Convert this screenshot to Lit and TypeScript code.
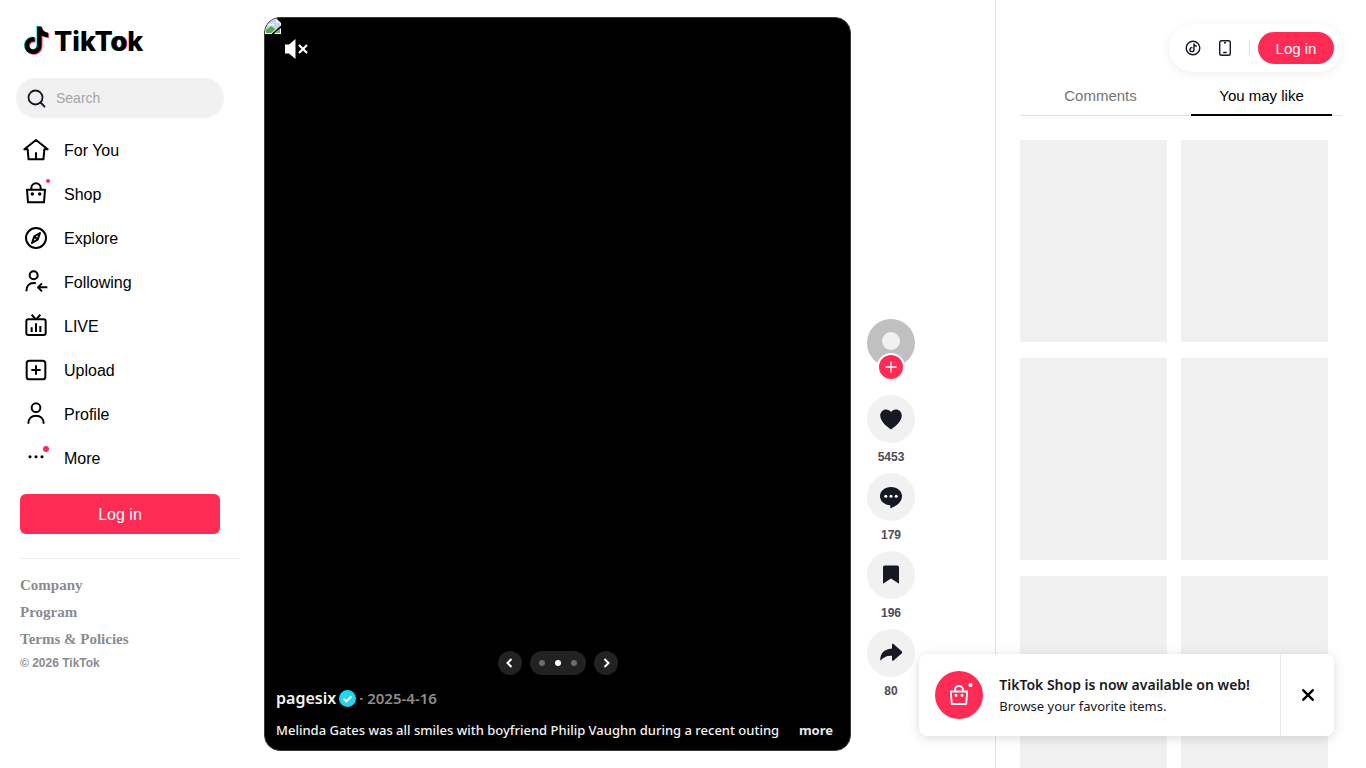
import { LitElement, html, css, svg } from "lit";
import { customElement, property } from "lit/decorators.js";

const glyphs: Record<string, unknown> = {
  home: svg`<path d="M6.500 23h5l1.300 15h22.400l1.300-15h5L24 9z" /><path d="M24 27.500V38" />`,
  shop: svg`<path d="M10.500 17.500h27L36 36.500H12zM17 17.500V15a7 7 0 0 1 14 0v2.500" /><circle class="solid" cx="18.500" cy="24" r="2.600" /><circle class="solid" cx="29.500" cy="24" r="2.600" />`,
  explore: svg`<circle cx="24" cy="24" r="15" /><path d="M30 16.500l-3.500 10-8.500 5 3.500-10z" /><path d="M21.500 21.500l5 5" />`,
  following: svg`<circle cx="20.500" cy="14" r="6" /><path d="M9.500 38c0-8 4.500-12.500 11-12.500 1.200 0 2.300.1 3.300.4M41 32H27.500M33 26l-6 6 6 6" />`,
  live: svg`<path d="M17.500 7l5.500 6.500M30.500 7 25 13.500" /><rect x="9.500" y="14" width="29" height="23.500" rx="3" /><path d="M24 20v13M17.500 26v7M30.500 24v9" />`,
  upload: svg`<rect x="10" y="10" width="28" height="28" rx="4" /><path d="M24 17v14M17 24h14" />`,
  profile: svg`<circle cx="24" cy="14.500" r="6.500" /><path d="M12.500 38.500c0-8 5-12 11.500-12s11.500 4 11.500 12" />`,
  more: svg`<circle class="solid" cx="15" cy="22" r="2.300" /><circle class="solid" cx="24" cy="22" r="2.300" /><circle class="solid" cx="33" cy="22" r="2.300" />`,
};

const note = "M17 .5h4.500c.4 3.600 2.800 5.800 6.500 6.200v4.500c-2.500 0-4.700-.8-6.500-2V19.500a8.500 8.500 0 1 1-7-8.400v4.600a4 4 0 1 0 2.500 3.800z";

@customElement("nav-item")
class NavItem extends LitElement {
  @property() icon = "home";
  @property() label = "";
  @property() dot = "";
  static styles = css`
    :host { display: block; }
    a { display: flex; align-items: center; gap: 12px; height: 44px; color: #000; text-decoration: none; font-size: 16px; }
    .label { padding-top: 2px; }
    .icon { position: relative; display: flex; }
    svg { width: 32px; height: 32px; fill: none; stroke: #000; stroke-width: 3; stroke-linejoin: round; }
    .solid { fill: #000; stroke: none; }
    .dot { position: absolute; border-radius: 50%; background: #fe2c55; }
    .small { width: 4px; height: 4px; top: 1px; right: 2px; }
    .large { width: 6px; height: 6px; top: 4px; right: 3px; }
  `;
  render() {
    return html`<a href="#"><span class="icon"><svg viewBox="0 0 48 48" aria-hidden="true">${glyphs[this.icon]}</svg>${this.dot ? html`<span class="dot ${this.dot}"></span>` : ""}</span><span class="label">${this.label}</span></a>`;
  }
}

@customElement("action-button")
class ActionButton extends LitElement {
  @property() name = "";
  @property() count = "";
  static styles = css`
    :host { display: flex; flex-direction: column; align-items: center; }
    button { display: grid; place-items: center; width: 48px; height: 48px; border: 0; border-radius: 50%; padding: 0; background: #f1f1f2; color: #161823; }
    svg { width: 24px; height: 24px; fill: currentColor; }
    .hole { fill: #fff; }
    strong { font-size: 12px; line-height: 18px; padding: 5px 0 7px; color: #4c4d56; }
  `;
  render() {
    const shapes: Record<string, unknown> = {
      Like: svg`<path d="M12 22.500C8 20 1.200 14.500 1.200 8.600 1.200 5 3.800 2.400 7 2.400c2 0 3.900 1 5 2.700 1.100-1.700 3-2.700 5-2.700 3.200 0 5.800 2.600 5.800 6.200C22.800 14.500 16 20 12 22.500z" />`,
      Comment: svg`<path d="M12 2C5.800 2 1 6 1 11.300c0 5 4.600 8.700 10.300 9v3c5.500-1.600 11.700-6 11.700-12C23 6 18.200 2 12 2z" /><circle class="hole" cx="6.800" cy="11.300" r="1.500" /><circle class="hole" cx="12" cy="11.300" r="1.500" /><circle class="hole" cx="17.200" cy="11.300" r="1.500" />`,
      Save: svg`<path d="M4 4.500C4 3.400 4.800 2.500 6 2.500h12c1.200 0 2 .9 2 2v16.300L12 15.500l-8 5.300z" />`,
      Share: svg`<path d="M13 3.600c0-.9.900-1.200 1.500-.7l8.200 7.400c.6.600.6 1.500 0 2.100l-8.200 7.200c-.6.500-1.500.2-1.500-.7v-4.200C7.500 14.400 4 16.500 1.200 19.800 1.200 13 4.500 8 13 7.500z" />`,
    };
    return html`<button aria-label=${this.name}><svg viewBox="0 0 24 24">${shapes[this.name]}</svg></button><strong>${this.count}</strong>`;
  }
}

@customElement("app-root")
class AppRoot extends LitElement {
  static styles = css`
    * { box-sizing: border-box; }
    :host { display: grid; grid-template-columns: 240px minmax(0, 1fr) 371px; height: 100vh; overflow: hidden; background: #fff; color: #000; font-family: "Liberation Sans", Arial, sans-serif; }
    button { font-family: inherit; border: 0; padding: 0; cursor: pointer; }
    a { text-decoration: none; color: inherit; }
    .red { background: #fe2c55; color: #fff; }

    .sidebar { padding: 24px 0 0 20px; }
    .logo { display: flex; align-items: center; gap: 2px; height: 36px; font: 800 27px/36px Inter, sans-serif; }
    .logo svg { width: 32px; height: 32px; }
    .tint { text-shadow: -1px 0 #25f4ee, 1px 0 #fe2c55; }
    .search { display: flex; align-items: center; gap: 8px; height: 40px; margin: 18px 16px 10px -4px; padding: 0 16px 0 8px; border-radius: 20px; background: #f1f1f2; }
    .search svg { flex: none; width: 24px; height: 24px; fill: none; stroke: #161823; stroke-width: 1.800; stroke-linecap: round; }
    .search input { min-width: 0; width: 100%; border: 0; padding: 0; outline: 0; background: none; font: 14px/20px "Liberation Sans", Arial, sans-serif; }
    .search input::placeholder { color: #a5a5a9; opacity: 1; }
    .login { display: block; width: calc(100% - 20px); height: 40px; margin: 14px 0 24px; padding-top: 2px; border-radius: 6px; font-size: 16px; }
    .footer { display: flex; flex-direction: column; padding-top: 13px; border-top: 1px solid #ececed; color: #8a8b91; font: bold 15px/27px "Liberation Serif", "Times New Roman", serif; }
    .copyright { font: bold 12px/20px "Liberation Sans", Arial, sans-serif; }

    .feed { display: flex; gap: 16px; padding: 17px 80px 17px 24px; }
    .player { position: relative; display: flex; flex-direction: column; justify-content: space-between; flex: 1; min-width: 0; overflow: hidden; border: 1px solid #3a3a3a; border-radius: 16px; padding: 19px 11px 7px; background: #000; color: #f3f3f3; font-family: "Noto Sans", sans-serif; }
    .broken { position: absolute; top: 0; left: 0; width: 16px; height: 16px; }
    .mute { display: flex; width: 40px; height: 24px; margin-left: 8px; background: none; }
    .mute svg { width: 24px; height: 24px; }
    .pager { display: flex; justify-content: center; gap: 8px; margin-bottom: 10px; }
    .arrow { display: grid; place-items: center; width: 24px; height: 24px; border-radius: 50%; background: #222; }
    .arrow svg { width: 12px; height: 12px; fill: none; stroke: #fff; stroke-width: 2; }
    .dots { display: flex; align-items: center; justify-content: center; gap: 10px; width: 56px; border-radius: 12px; background: #222; }
    .dots span { width: 6px; height: 6px; border-radius: 50%; background: #6d6d6d; }
    .dots .on { background: #fff; }
    .author { display: flex; align-items: center; gap: 3px; height: 26px; font-size: 16px; font-weight: 600; }
    .author svg { width: 17px; height: 17px; }
    .date { color: #8e8e8e; font-size: 15px; }
    .caption { display: flex; justify-content: space-between; gap: 8px; margin-top: 6px; padding-right: 6px; font-size: 13px; font-weight: 500; line-height: 26px; }
    .caption p { margin: 0; }
    .caption button { background: none; color: #e8e8e8; font-size: 13px; font-weight: 700; }

    .actions { display: flex; flex-direction: column; justify-content: flex-end; padding-bottom: 44px; }
    .avatar { position: relative; height: 76px; }
    .avatar svg { width: 48px; height: 48px; display: block; }
    .follow { position: absolute; top: 36px; left: 12px; display: grid; place-items: center; width: 24px; height: 24px; border-radius: 50%; box-shadow: 0 0 0 2px #fff; }
    .avatar .follow svg { width: 12px; height: 12px; stroke: #fff; stroke-width: 1.300; }

    .related { min-width: 0; overflow: hidden; padding: 76px 24px 0; border-left: 1px solid #e3e3e4; }
    .tabs { display: grid; grid-template-columns: 1fr 1fr; height: 40px; border-bottom: 1px solid #e3e3e4; }
    .tabs button { margin: 0 10px -1px; border-bottom: 2px solid transparent; background: none; color: #73747b; font-size: 15px; }
    .tabs .active { color: #000; border-color: #000; }
    .grid { display: grid; grid-template-columns: 1fr 1fr; gap: 16px 14px; padding: 24px 14px 0 0; }
    .card { display: block; height: 202px; background: #f0f0f0; }

    .topbar { position: absolute; top: 24px; right: 24px; display: flex; align-items: center; gap: 8px; height: 48px; padding: 0 8px 0 12px; border-radius: 24px; background: #fff; box-shadow: 0 2px 10px rgba(0, 0, 0, 0.07); }
    .tool { display: grid; place-items: center; width: 24px; height: 24px; background: none; }
    .tool svg { width: 16px; height: 16px; fill: none; stroke: #161823; stroke-width: 1.400; }
    .tool .fill { fill: #161823; stroke: none; }
    .rule { width: 1px; height: 16px; background: #e0e0e2; margin-left: 4px; }
    .pill { width: 76px; height: 32px; border-radius: 16px; font-size: 15px; }

    .toast { position: absolute; right: 32px; bottom: 32px; display: flex; align-items: stretch; height: 82px; border-radius: 8px; background: #fff; box-shadow: 0 2px 12px rgba(0, 0, 0, 0.14); color: #161823; font-family: "Noto Sans", sans-serif; }
    .message { display: flex; align-items: center; gap: 16px; padding: 0 30px 0 16px; }
    .badge { display: grid; place-items: center; width: 48px; height: 48px; border-radius: 50%; }
    .badge svg { width: 32px; height: 32px; fill: none; stroke: #fff; stroke-width: 1.800; stroke-linejoin: round; }
    .badge .fill { fill: #fff; stroke: none; }
    .message h2 { margin: 0; font-size: 14px; font-weight: 600; line-height: 22px; }
    .message p { margin: 0; font-size: 13px; line-height: 20px; }
    .close { display: grid; place-items: center; width: 54px; border-left: 1px solid #ececed; background: none; }
    .close svg { width: 12px; height: 12px; stroke: #000; stroke-width: 2.400; }
  `;

  render() {
    return html`
      <nav class="sidebar">
        <a class="logo" href="#" aria-label="TikTok">
          <svg viewBox="0 0 32 32" aria-hidden="true">
            <path d=${note} fill="#25f4ee" transform="translate(-.8 -.4)" />
            <path d=${note} fill="#fe2c55" transform="translate(1 .9)" />
            <path d=${note} fill="#000" />
          </svg>
          <span>TikT<span class="tint">o</span>k</span>
        </a>
        <label class="search">
          <svg viewBox="0 0 24 24" aria-hidden="true"><circle cx="11.500" cy="11.500" r="7" /><path d="M16.500 16.500l4 4" /></svg>
          <input type="search" placeholder="Search" aria-label="Search" />
        </label>
        <nav-item icon="home" label="For You"></nav-item>
        <nav-item icon="shop" label="Shop" dot="small"></nav-item>
        <nav-item icon="explore" label="Explore"></nav-item>
        <nav-item icon="following" label="Following"></nav-item>
        <nav-item icon="live" label="LIVE"></nav-item>
        <nav-item icon="upload" label="Upload"></nav-item>
        <nav-item icon="profile" label="Profile"></nav-item>
        <nav-item icon="more" label="More" dot="large"></nav-item>
        <button class="login red">Log in</button>
        <div class="footer">
          <a href="#">Company</a><a href="#">Program</a><a href="#">Terms &amp; Policies</a>
          <span class="copyright">© 2026 TikTok</span>
        </div>
      </nav>

      <main class="feed">
        <section class="player">
          <svg class="broken" viewBox="0 0 16 16" aria-hidden="true">
            <path d="M0 0h11l5 5v11H0z" fill="#fff" /><path d="M1 1h10l4 4v10H1z" fill="#c3d5f5" />
            <path d="M3 7.500a2 2 0 0 1 3-1.500 2 2 0 0 1 3.500 1.500z" fill="#fff" />
            <path d="M1 15v-3l5-4 4 3-4 4z" fill="#55a847" /><path d="M11 1v4h4z" fill="#fff" />
            <path d="M16 7.500 6.500 16H9l7-6z" fill="#000" /><path d="M9.500 15h5.500v-4.500z" fill="#74b768" />
          </svg>
          <button class="mute" aria-label="Unmute">
            <svg viewBox="0 0 24 24"><path d="M1 7.500h4L11.500 2v20L5 16.500H1z" fill="#fff" /><path d="M15 8l8 8M23 8l-8 8" stroke="#fff" stroke-width="2.200" /></svg>
          </button>
          <div>
            <div class="pager">
              <button class="arrow" aria-label="Previous"><svg viewBox="0 0 12 12"><path d="M7.500 2 3.500 6l4 4" /></svg></button>
              <div class="dots"><span></span><span class="on"></span><span></span></div>
              <button class="arrow" aria-label="Next"><svg viewBox="0 0 12 12"><path d="M4.500 2l4 4-4 4" /></svg></button>
            </div>
            <div class="author">
              <a href="#">pagesix</a>
              <svg viewBox="0 0 18 18" aria-label="Verified"><circle cx="9" cy="9" r="9" fill="#20d5ec" /><path d="M4.800 9.200 7.800 12l5.500-5.500" fill="none" stroke="#fff" stroke-width="2" /></svg>
              <span class="date">· 2025-4-16</span>
            </div>
            <div class="caption">
              <p>Melinda Gates was all smiles with boyfriend Philip Vaughn during a recent outing</p>
              <button>more</button>
            </div>
          </div>
        </section>
        <section class="actions">
          <div class="avatar">
            <svg viewBox="0 0 48 48" aria-hidden="true"><circle cx="24" cy="24" r="24" fill="#c0c0c0" /><circle cx="24" cy="22" r="9" fill="#f1f1f2" /></svg>
            <button class="follow red" aria-label="Follow"><svg viewBox="0 0 12 12"><path d="M6 .5v11M.5 6h11" /></svg></button>
          </div>
          <action-button name="Like" count="5453"></action-button>
          <action-button name="Comment" count="179"></action-button>
          <action-button name="Save" count="196"></action-button>
          <action-button name="Share" count="80"></action-button>
        </section>
      </main>

      <aside class="related">
        <div class="tabs"><button>Comments</button><button class="active">You may like</button></div>
        <div class="grid">${[1, 2, 3, 4, 5, 6].map((n) => html`<a class="card" href="#" aria-label="Video ${n}"></a>`)}</div>
      </aside>

      <div class="topbar">
        <button class="tool" aria-label="Get coins"><svg viewBox="0 0 16 16"><circle cx="8" cy="8" r="6.800" /><path class="fill" transform="translate(2.800 3.400) scale(.32)" d=${note} /></svg></button>
        <button class="tool" aria-label="Get app"><svg viewBox="0 0 16 16"><rect x="2.700" y=".8" width="10.600" height="14.400" rx="1.800" /><path d="M6.300 12.500h3.400M7 2.700h2" /></svg></button>
        <span class="rule"></span>
        <button class="pill red">Log in</button>
      </div>

      <div class="toast" role="status">
        <div class="message">
          <span class="badge red"><svg viewBox="0 0 32 32" aria-hidden="true"><path d="M7.800 12.500h16.400L23.200 25H8.800zM12 12.500V11a4 4 0 0 1 8 0v1.500" /><circle class="fill" cx="13" cy="16.500" r="1.400" /><circle class="fill" cx="19" cy="16.500" r="1.400" /><circle class="fill" cx="27.500" cy="6" r="2" /></svg></span>
          <div><h2>TikTok Shop is now available on web!</h2><p>Browse your favorite items.</p></div>
        </div>
        <button class="close" aria-label="Close"><svg viewBox="0 0 12 12"><path d="M.5.5l11 11M11.500.5l-11 11" /></svg></button>
      </div>
    `;
  }
}
